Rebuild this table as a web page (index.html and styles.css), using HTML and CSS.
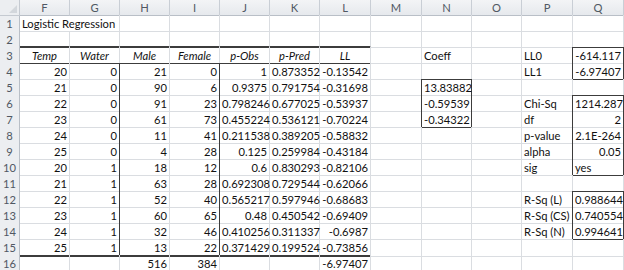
FILE: index.html
```html
<!DOCTYPE html>
<html>
<head>
<meta charset="utf-8">
<link rel="stylesheet" href="styles.css">
</head>
<body>
<div class="sheet">
  <div class="row hdr">
    <div class="corner"><span class="tri"></span></div>
    <div class="ch">F</div><div class="ch">G</div><div class="ch">H</div><div class="ch">I</div><div class="ch">J</div><div class="ch">K</div><div class="ch">L</div><div class="ch">M</div><div class="ch">N</div><div class="ch">O</div><div class="ch">P</div><div class="ch">Q</div>
  </div>
  <div class="row">
    <div class="rh">1</div>
    <div class="c t nr">Logistic Regression</div><div class="c"></div><div class="c"></div><div class="c"></div><div class="c"></div><div class="c"></div><div class="c"></div><div class="c"></div><div class="c"></div><div class="c"></div><div class="c"></div><div class="c"></div>
  </div>
  <div class="row">
    <div class="rh">2</div>
    <div class="c bbk"></div><div class="c bbk"></div><div class="c bbk"></div><div class="c bbk"></div><div class="c bbk"></div><div class="c bbk"></div><div class="c bbk"></div><div class="c"></div><div class="c"></div><div class="c"></div><div class="c"></div><div class="c bb"></div>
  </div>
  <div class="row">
    <div class="rh">3</div>
    <div class="c h bb">Temp</div><div class="c h bb">Water</div><div class="c h bb">Male</div><div class="c h bb">Female</div><div class="c h bb">p-Obs</div><div class="c h bb">p-Pred</div><div class="c h bb">LL</div><div class="c"></div><div class="c t">Coeff</div><div class="c"></div><div class="c t br">LL0</div><div class="c br">-614.117</div>
  </div>
  <div class="row">
    <div class="rh">4</div>
    <div class="c">20</div><div class="c br">0</div><div class="c">21</div><div class="c br">0</div><div class="c">1</div><div class="c">0.873352</div><div class="c">-0.13542</div><div class="c"></div><div class="c bb"></div><div class="c"></div><div class="c t br">LL1</div><div class="c br bb">-6.97407</div>
  </div>
  <div class="row">
    <div class="rh">5</div>
    <div class="c">21</div><div class="c br">0</div><div class="c">90</div><div class="c br">6</div><div class="c">0.9375</div><div class="c">0.791754</div><div class="c">-0.31698</div><div class="c br"></div><div class="c br">13.83882</div><div class="c"></div><div class="c"></div><div class="c bb"></div>
  </div>
  <div class="row">
    <div class="rh">6</div>
    <div class="c">22</div><div class="c br">0</div><div class="c">91</div><div class="c br">23</div><div class="c">0.798246</div><div class="c">0.677025</div><div class="c">-0.53937</div><div class="c br"></div><div class="c br">-0.59539</div><div class="c"></div><div class="c t br">Chi-Sq</div><div class="c br">1214.287</div>
  </div>
  <div class="row">
    <div class="rh">7</div>
    <div class="c">23</div><div class="c br">0</div><div class="c">61</div><div class="c br">73</div><div class="c">0.455224</div><div class="c">0.536121</div><div class="c">-0.70224</div><div class="c br"></div><div class="c br bb">-0.34322</div><div class="c"></div><div class="c t br">df</div><div class="c br">2</div>
  </div>
  <div class="row">
    <div class="rh">8</div>
    <div class="c">24</div><div class="c br">0</div><div class="c">11</div><div class="c br">41</div><div class="c">0.211538</div><div class="c">0.389205</div><div class="c">-0.58832</div><div class="c"></div><div class="c"></div><div class="c"></div><div class="c t br">p-value</div><div class="c br">2.1E-264</div>
  </div>
  <div class="row">
    <div class="rh">9</div>
    <div class="c">25</div><div class="c br">0</div><div class="c">4</div><div class="c br">28</div><div class="c">0.125</div><div class="c">0.259984</div><div class="c">-0.43184</div><div class="c"></div><div class="c"></div><div class="c"></div><div class="c t br">alpha</div><div class="c br">0.05</div>
  </div>
  <div class="row">
    <div class="rh">10</div>
    <div class="c">20</div><div class="c br">1</div><div class="c">18</div><div class="c br">12</div><div class="c">0.6</div><div class="c">0.830293</div><div class="c">-0.82106</div><div class="c"></div><div class="c"></div><div class="c"></div><div class="c t br">sig</div><div class="c t br bb">yes</div>
  </div>
  <div class="row">
    <div class="rh">11</div>
    <div class="c">21</div><div class="c br">1</div><div class="c">63</div><div class="c br">28</div><div class="c">0.692308</div><div class="c">0.729544</div><div class="c">-0.62066</div><div class="c"></div><div class="c"></div><div class="c"></div><div class="c"></div><div class="c bb"></div>
  </div>
  <div class="row">
    <div class="rh">12</div>
    <div class="c">22</div><div class="c br">1</div><div class="c">52</div><div class="c br">40</div><div class="c">0.565217</div><div class="c">0.597946</div><div class="c">-0.68683</div><div class="c"></div><div class="c"></div><div class="c"></div><div class="c t br">R-Sq (L)</div><div class="c br">0.988644</div>
  </div>
  <div class="row">
    <div class="rh">13</div>
    <div class="c">23</div><div class="c br">1</div><div class="c">60</div><div class="c br">65</div><div class="c">0.48</div><div class="c">0.450542</div><div class="c">-0.69409</div><div class="c"></div><div class="c"></div><div class="c"></div><div class="c t br">R-Sq (CS)</div><div class="c br">0.740554</div>
  </div>
  <div class="row">
    <div class="rh">14</div>
    <div class="c">24</div><div class="c br">1</div><div class="c">32</div><div class="c br">46</div><div class="c">0.410256</div><div class="c">0.311337</div><div class="c">-0.6987</div><div class="c"></div><div class="c"></div><div class="c"></div><div class="c t br">R-Sq (N)</div><div class="c br bb">0.994641</div>
  </div>
  <div class="row">
    <div class="rh">15</div>
    <div class="c bbk">25</div><div class="c br bbk">1</div><div class="c bbk">13</div><div class="c br bbk">22</div><div class="c bbk">0.371429</div><div class="c bbk">0.199524</div><div class="c bbk">-0.73856</div><div class="c"></div><div class="c"></div><div class="c"></div><div class="c"></div><div class="c"></div>
  </div>
  <div class="row">
    <div class="rh">16</div>
    <div class="c"></div><div class="c"></div><div class="c">516</div><div class="c">384</div><div class="c"></div><div class="c"></div><div class="c">-6.97407</div><div class="c"></div><div class="c"></div><div class="c"></div><div class="c"></div><div class="c"></div>
  </div>
</div>
</body>
</html>
```

FILE: styles.css
```css
* { box-sizing: border-box; }
body {
  margin: 0;
  background: #ffffff;
  font-family: Lato, "Open Sans", "Liberation Sans", sans-serif;
  font-size: 11.2px;
  color: #111111;
}
.sheet { width: 624px; overflow: hidden; }
.row {
  display: grid;
  grid-template-columns: 20px 50px 50px 50px 50px 50px 50px 51px 51px 50px 50px 51px 51px;
  height: 16px;
}
.row.hdr { height: 15px; }
.corner {
  position: relative;
  background: #eceef1;
  border-right: 1px solid #c5cad1;
  border-bottom: 1px solid #c5cad1;
}
.tri {
  position: absolute;
  right: 2px;
  bottom: 2px;
  width: 0;
  height: 0;
  border-left: 8px solid transparent;
  border-bottom: 8px solid #d3d7dc;
}
.ch {
  background: linear-gradient(#f3f4f6, #e6e9ed);
  border-right: 1px solid #c9ced5;
  border-bottom: 1px solid #b9bfc7;
  text-align: center;
  color: #505863;
  padding-top: 1px;
  line-height: 14px;
}
.rh {
  background: #eceef1;
  border-right: 1px solid #b9bfc7;
  border-bottom: 1px solid #d1d5db;
  text-align: center;
  color: #505863;
  padding-top: 1px;
  line-height: 15px;
}
.c {
  border-right: 1px solid #dadde1;
  border-bottom: 1px solid #dadde1;
  padding: 1px 2px 0;
  line-height: 15px;
  white-space: nowrap;
  text-align: right;
  overflow: visible;
}
.c.t { text-align: left; }
.c.h { text-align: center; font-style: italic; }
.c.nr { border-right-color: transparent; }
.c.br { border-right-color: #3c3c3c; }
.c.bb { border-bottom-color: #3c3c3c; }
.c.bbk { border-bottom: 2px solid #3c3c3c; }
```
